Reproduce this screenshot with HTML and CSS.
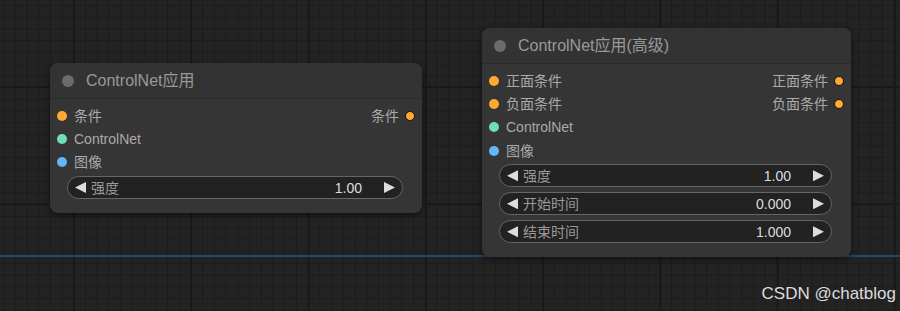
FILE: index.html
```html
<!DOCTYPE html>
<html lang="zh-CN">
<head>
    <meta charset="UTF-8">
    <title>ControlNet 节点</title>
    <link rel="stylesheet" href="styles.css">
</head>
<body>
    <div class="canvas">
        <div class="link-line"></div>

        <div class="node node-basic">
            <div class="node-title">
                <span class="title-dot"></span>
                <span>ControlNet应用</span>
            </div>
            <div class="node-body">
                <div class="slot-row">
                    <div class="slot-in"><span class="dot dot-cond"></span>条件</div>
                    <div class="slot-out">条件<span class="dot dot-cond dot-out"></span></div>
                </div>
                <div class="slot-row">
                    <div class="slot-in"><span class="dot dot-cnet"></span>ControlNet</div>
                </div>
                <div class="slot-row">
                    <div class="slot-in"><span class="dot dot-image"></span>图像</div>
                </div>
                <div class="widgets">
                    <div class="widget">
                        <span class="arrow arrow-left"></span>
                        <span class="widget-label">强度</span>
                        <span class="widget-value">1.00</span>
                        <span class="arrow arrow-right"></span>
                    </div>
                </div>
            </div>
        </div>

        <div class="node node-advanced">
            <div class="node-title">
                <span class="title-dot"></span>
                <span>ControlNet应用(高级)</span>
            </div>
            <div class="node-body">
                <div class="slot-row">
                    <div class="slot-in"><span class="dot dot-cond"></span>正面条件</div>
                    <div class="slot-out">正面条件<span class="dot dot-cond dot-out"></span></div>
                </div>
                <div class="slot-row">
                    <div class="slot-in"><span class="dot dot-cond"></span>负面条件</div>
                    <div class="slot-out">负面条件<span class="dot dot-cond dot-out"></span></div>
                </div>
                <div class="slot-row">
                    <div class="slot-in"><span class="dot dot-cnet"></span>ControlNet</div>
                </div>
                <div class="slot-row">
                    <div class="slot-in"><span class="dot dot-image"></span>图像</div>
                </div>
                <div class="widgets">
                    <div class="widget">
                        <span class="arrow arrow-left"></span>
                        <span class="widget-label">强度</span>
                        <span class="widget-value">1.00</span>
                        <span class="arrow arrow-right"></span>
                    </div>
                    <div class="widget">
                        <span class="arrow arrow-left"></span>
                        <span class="widget-label">开始时间</span>
                        <span class="widget-value">0.000</span>
                        <span class="arrow arrow-right"></span>
                    </div>
                    <div class="widget">
                        <span class="arrow arrow-left"></span>
                        <span class="widget-label">结束时间</span>
                        <span class="widget-value">1.000</span>
                        <span class="arrow arrow-right"></span>
                    </div>
                </div>
            </div>
        </div>

        <div class="watermark">CSDN @chatblog</div>
    </div>
</body>
</html>
```

FILE: styles.css
```css
body {
    margin: 0;
    font-family: "Liberation Sans", Arial, "Noto Sans CJK SC", sans-serif;
}
.canvas {
    position: relative;
    width: 900px;
    height: 311px;
    overflow: hidden;
    background-color: #232323;
    background-image:
        linear-gradient(90deg, #191919 2px, transparent 2px),
        linear-gradient(#191919 2px, transparent 2px),
        linear-gradient(90deg, #1c1c1c 1px, transparent 1px),
        linear-gradient(#1c1c1c 1px, transparent 1px);
    background-size: 117.3px 117.3px, 117.3px 117.3px, 11.73px 11.73px, 11.73px 11.73px;
    background-position: 73px 0, 0 86px, 3px 0, 0 5px;
}
.link-line {
    position: absolute;
    left: 0;
    right: 0;
    top: 255px;
    height: 2px;
    background: #27437a;
}
.node {
    position: absolute;
    background: #353535;
    border-radius: 8px;
    box-shadow: 0 2px 6px rgba(0, 0, 0, 0.55);
    overflow: hidden;
}
.node-basic {
    left: 50px;
    top: 63px;
    width: 372px;
    height: 150px;
}
.node-advanced {
    left: 482px;
    top: 28px;
    width: 369px;
    height: 229px;
}
.node-title {
    height: 35px;
    display: flex;
    align-items: center;
    gap: 12px;
    padding-left: 12px;
    background: #333333;
    border-bottom: 1px solid #2b2b2b;
    color: #999999;
    font-size: 16px;
    line-height: 18px;
}
.title-dot {
    width: 12px;
    height: 12px;
    border-radius: 50%;
    background: #6b6b6b;
}
.node-body {
    padding-top: 5px;
}
.slot-row {
    height: 23.3px;
    display: flex;
    align-items: center;
    justify-content: space-between;
    font-size: 14px;
    line-height: 16px;
    color: #aaaaaa;
}
.slot-in {
    display: flex;
    align-items: center;
    padding-left: 7px;
    gap: 7px;
}
.slot-out {
    display: flex;
    align-items: center;
    padding-right: 7px;
    gap: 6px;
}
.dot {
    width: 10px;
    height: 10px;
    border-radius: 50%;
    box-sizing: border-box;
}
.dot-cond {
    background: #ffa931;
}
.dot-cnet {
    background: #6ee0b4;
}
.dot-image {
    background: #64b5f6;
}
.dot-out {
    border: 1px solid #111111;
}
.widgets {
    display: flex;
    flex-direction: column;
    gap: 4.7px;
    margin: 2px 19px 0 17px;
}
.widget {
    height: 23.3px;
    box-sizing: border-box;
    display: flex;
    align-items: center;
    padding: 0 7px;
    background: #222222;
    border: 1px solid #666666;
    border-radius: 12px;
    font-size: 14px;
    line-height: 16px;
}
.arrow {
    width: 11px;
    height: 11px;
    background: #dddddd;
}
.arrow-left {
    clip-path: polygon(100% 0, 0 50%, 100% 100%);
}
.arrow-right {
    clip-path: polygon(0 0, 100% 50%, 0 100%);
}
.widget-label {
    flex: 1;
    margin-left: 5px;
    color: #999999;
}
.widget-value {
    margin-right: 22px;
    color: #dddddd;
}
.watermark {
    position: absolute;
    right: 4px;
    top: 284px;
    font-size: 17px;
    color: #dcdcdc;
}
```
